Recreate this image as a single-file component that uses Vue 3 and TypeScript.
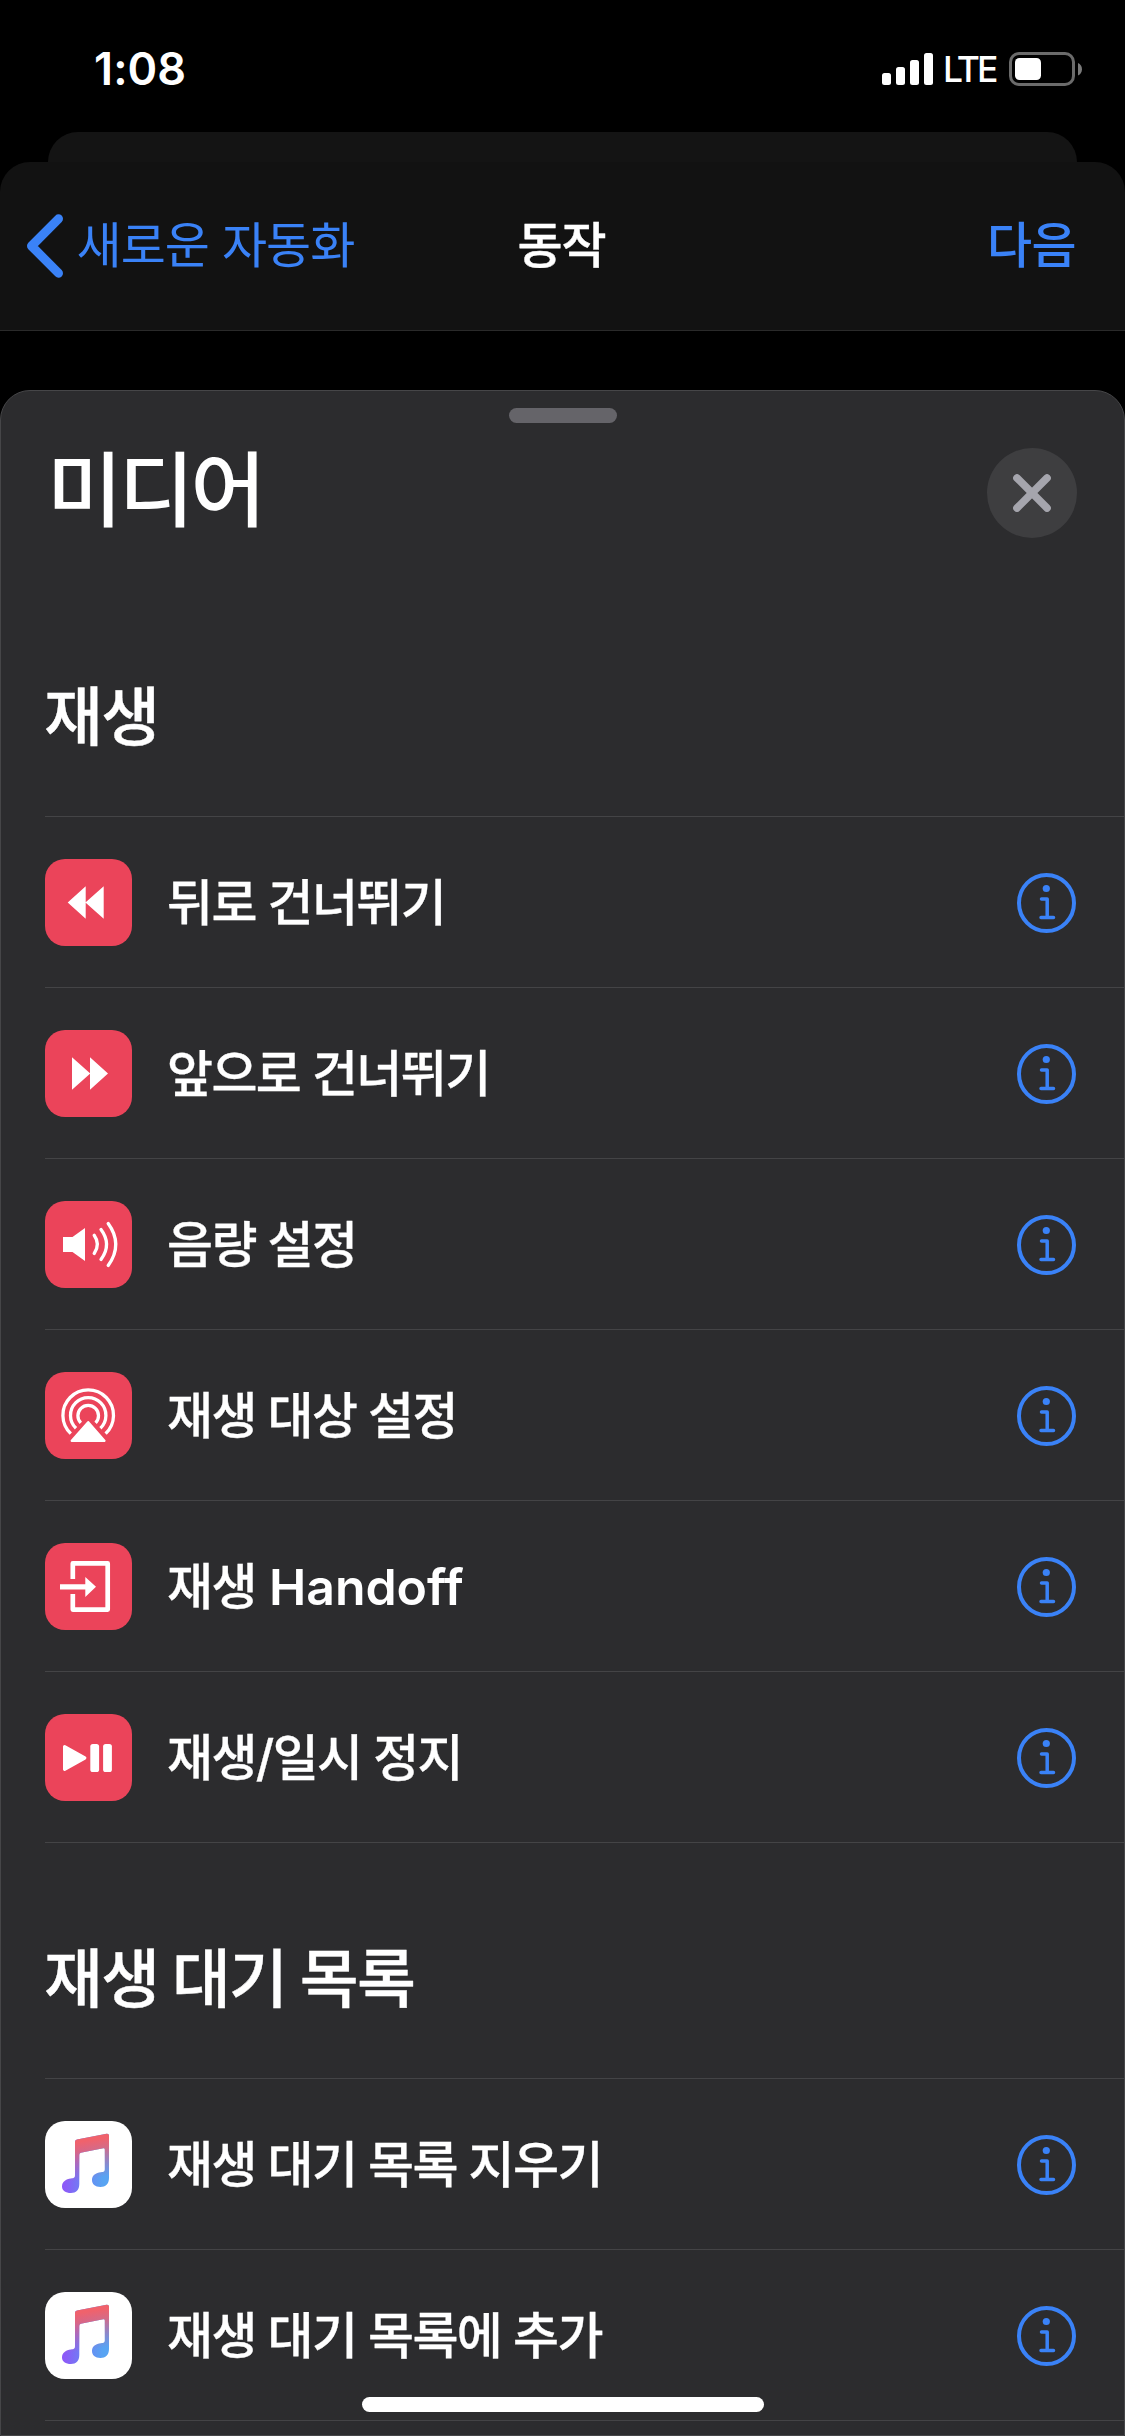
<script setup lang="ts">
type IconName = 'rewind' | 'forward' | 'volume' | 'airplay' | 'handoff' | 'playpause' | 'music'

interface Action {
  label: string
  latin?: string
  icon: IconName
}

interface Section {
  title: string
  actions: Action[]
}

const sections: Section[] = [
  {
    title: '재생',
    actions: [
      { label: '뒤로 건너뛰기', icon: 'rewind' },
      { label: '앞으로 건너뛰기', icon: 'forward' },
      { label: '음량 설정', icon: 'volume' },
      { label: '재생 대상 설정', icon: 'airplay' },
      { label: '재생 ', latin: 'Handoff', icon: 'handoff' },
      { label: '재생/일시 정지', icon: 'playpause' },
    ],
  },
  {
    title: '재생 대기 목록',
    actions: [
      { label: '재생 대기 목록 지우기', icon: 'music' },
      { label: '재생 대기 목록에 추가', icon: 'music' },
    ],
  },
]

const notePath =
  'M30 21Q30 19 32 18.6L61.5 12.8Q64 12.4 64 14.5V57C64 63 60.5 66 55.5 66C50 66 47 63 47 59C47 54 51 51.8 56 51.2C59 50.8 59.8 50.5 59.8 48V28.5Q59.8 27 58.3 27.3L35.8 31.8Q34.3 32.1 34.3 33.8V63C34.3 69 31 72 26 72C20.5 72 17 69.5 17 65.5C17 60.5 21 58.2 26 57.5C29 57 30 56.8 30 54Z'
</script>

<template>
  <div class="screen">
    <header class="status">
      <span class="time">1:08</span>
      <div class="indicators">
        <svg class="signal" width="51" height="32" viewBox="0 0 51 32" fill="#fff">
          <rect x="0" y="20" width="9" height="12" rx="2.5" />
          <rect x="14" y="14" width="9" height="18" rx="2.5" />
          <rect x="28" y="7" width="9" height="25" rx="2.5" />
          <rect x="42" y="0" width="9" height="32" rx="2.5" />
        </svg>
        <span class="lte">LTE</span>
        <svg class="battery" width="73" height="34" viewBox="0 0 73 34">
          <rect x="1.5" y="1.5" width="63" height="31" rx="8.5" fill="none" stroke="#6b6b6b" stroke-width="3" />
          <rect x="6" y="6" width="26" height="22" rx="4.5" fill="#fff" />
          <path d="M69 11C71.500 12 73 14.500 73 17.200S71.500 22.500 69 23.500Z" fill="#7a7a7a" />
        </svg>
      </div>
    </header>

    <div class="back-sheet"></div>

    <nav class="nav">
      <div class="back">
        <svg width="38" height="64" viewBox="0 0 38 64" fill="none" stroke="#3a82f7" stroke-width="9" stroke-linecap="round" stroke-linejoin="round">
          <path d="M32.500 4.800L5.500 32L32.500 59.200" />
        </svg>
        <span class="back-label">새로운 자동화</span>
      </div>
      <span class="nav-title">동작</span>
      <span class="next">다음</span>
    </nav>

    <main class="panel">
      <div class="grabber"></div>
      <div class="panel-head">
        <h1>미디어</h1>
        <button class="close" type="button">
          <svg width="38" height="38" viewBox="0 0 38 38" stroke="#a5a5ad" stroke-width="7.600" stroke-linecap="round">
            <path d="M4 4L34 34M34 4L4 34" />
          </svg>
        </button>
      </div>

      <section v-for="section in sections" :key="section.title">
        <h2>{{ section.title }}</h2>
        <ul>
          <li v-for="action in section.actions" :key="action.label">
            <svg class="tile" :class="{ light: action.icon === 'music' }" width="87" height="87" viewBox="0 0 87 87" fill="#fff">
              <path v-if="action.icon === 'rewind'" d="M22.700 43.500L40.700 27.200V43.300L58.700 27.200V59.800L40.700 43.700V59.800Z" />
              <path v-else-if="action.icon === 'forward'" d="M27 27.200L45 43.300V27.200L63 43.500L45 59.800V43.700L27 59.800Z" />
              <template v-else-if="action.icon === 'volume'">
                <path d="M18 36H27.500L40 27V60L27.500 51H18Z" />
                <g fill="none" stroke="#fff" stroke-width="3.300" stroke-linecap="round">
                  <path d="M49.200 34.300Q55.600 43.400 49.200 52.500" />
                  <path d="M56 28.500Q67.200 43.400 56 58.500" />
                  <path d="M63.200 22.500Q78.400 43.400 63.200 64.500" />
                </g>
              </template>
              <template v-else-if="action.icon === 'airplay'">
                <g fill="none" stroke="#fff" stroke-width="3.300">
                  <path d="M25.800 61.600A25.300 25.300 0 1 1 60.600 61.600" />
                  <path d="M31 56.200A17.700 17.700 0 1 1 55.400 56.200" />
                  <path d="M35.800 50.900A10.300 10.300 0 1 1 50.600 50.900" />
                </g>
                <path d="M43.200 50.200L59.400 68.800H26.800Z" stroke="#fff" stroke-width="2.400" stroke-linejoin="round" />
              </template>
              <template v-else-if="action.icon === 'handoff'">
                <path d="M27.800 36V20.400H62.700V66.600H27.800V51" fill="none" stroke="#fff" stroke-width="4.700" stroke-linejoin="round" />
                <path d="M15 41.200H40.300V34L51 43.700L40.300 54V46.400H15Z" />
              </template>
              <template v-else-if="action.icon === 'playpause'">
                <path d="M19.600 32.600L39.800 44L19.600 55.300Z" stroke="#fff" stroke-width="3.200" stroke-linejoin="round" />
                <rect x="45.300" y="30" width="8.800" height="28" rx="2.600" />
                <rect x="58.100" y="30" width="8.800" height="28" rx="2.600" />
              </template>
              <template v-else>
                <defs>
                  <linearGradient id="noteBase" gradientUnits="userSpaceOnUse" x1="20" y1="62" x2="58" y2="62">
                    <stop offset="0" stop-color="#8c5af8" />
                    <stop offset=".35" stop-color="#7478f4" />
                    <stop offset="1" stop-color="#58a4f2" />
                  </linearGradient>
                  <linearGradient id="noteTop" gradientUnits="userSpaceOnUse" x1="40" y1="20" x2="46" y2="58">
                    <stop offset="0" stop-color="#f0626c" />
                    <stop offset=".25" stop-color="#ea6274" stop-opacity=".85" />
                    <stop offset="1" stop-color="#c85aa8" stop-opacity="0" />
                  </linearGradient>
                </defs>
                <path :d="notePath" fill="url(#noteBase)" />
                <path :d="notePath" fill="url(#noteTop)" />
              </template>
            </svg>
            <span class="label">{{ action.label }}<span v-if="action.latin" class="latin">{{ action.latin }}</span></span>
            <svg class="info" width="59" height="60" viewBox="0 0 59 60" fill="none" stroke="#3a82f7">
              <ellipse cx="29.500" cy="30" rx="27.500" ry="28" stroke-width="4" />
              <circle cx="29.300" cy="15.500" r="3.600" fill="#3a82f7" stroke="none" />
              <path d="M24.500 26H30.200V44.500M24 44.500H36.500" stroke-width="3.500" stroke-linecap="round" stroke-linejoin="round" />
            </svg>
          </li>
        </ul>
      </section>
    </main>
    <div class="home"></div>
  </div>
</template>

<style>
body {
  background: #000;
}
</style>

<style scoped>
.screen {
  position: relative;
  display: flex;
  flex-direction: column;
  width: 1125px;
  height: 2436px;
  overflow: hidden;
  background: #000;
  color: #fff;
  font-family: Inter, "Noto Sans CJK KR", sans-serif;
  white-space: nowrap;
}
.status {
  display: flex;
  justify-content: space-between;
  box-sizing: border-box;
  height: 132px;
  padding: 0 43px 0 94px;
}
.time {
  margin-top: 42px;
  font-size: 45px;
  line-height: 54px;
  font-weight: 600;
  letter-spacing: 0.1px;
}
.indicators {
  display: flex;
  align-items: flex-start;
}
.signal {
  margin-top: 53px;
}
.lte {
  width: 64px;
  margin: 48px 2px 0 10px;
  font-size: 35.5px;
  line-height: 44px;
  font-weight: 500;
  letter-spacing: -3px;
}
.battery {
  margin-top: 52px;
}
.back-sheet {
  height: 30px;
  margin: 0 48px;
  border-radius: 30px 30px 0 0;
  background: #141414;
}
.nav {
  display: grid;
  grid-template-columns: 1fr auto 1fr;
  align-items: center;
  box-sizing: border-box;
  height: 169px;
  padding: 0 49px;
  border-bottom: 1px solid #2a2a2a;
  border-radius: 30px 30px 0 0;
  background: #121212;
  font-size: 49px;
  line-height: 72px;
  letter-spacing: -1.2px;
}
.back {
  display: flex;
  align-items: center;
  gap: 12.5px;
  margin-left: -23px;
  color: #3a82f7;
}
.back-label {
  letter-spacing: -0.9px;
}
.nav-title {
  padding-right: 2px;
  font-weight: 500;
  -webkit-text-stroke: 0.4px currentColor;
}
.next {
  justify-self: end;
  color: #3a82f7;
  font-weight: 500;
  letter-spacing: -0.6px;
}
.panel {
  box-sizing: border-box;
  height: 2046px;
  margin-top: 59px;
  padding: 17px 0 0 44px;
  overflow: hidden;
  border: 1px solid #464648;
  border-radius: 30px 30px 0 0;
  background: #2c2c2e;
}
.grabber {
  width: 108px;
  height: 15px;
  margin: 0 auto;
  border-radius: 8px;
  background: #656469;
  transform: translateX(-22px);
}
.panel-head {
  display: flex;
  justify-content: space-between;
  height: 158px;
  padding: 0 47px 0 2px;
}
h1,
h2,
ul {
  margin: 0;
  padding: 0;
}
h1 {
  margin-top: 8px;
  font-size: 82px;
  line-height: 120px;
  font-weight: 500;
  letter-spacing: -3.7px;
}
.close {
  display: flex;
  align-items: center;
  justify-content: center;
  width: 90px;
  height: 90px;
  margin-top: 25px;
  padding: 0;
  border: 0;
  border-radius: 50%;
  background: #3e3e40;
}
h2 {
  box-sizing: border-box;
  height: 235px;
  margin-left: -1px;
  padding-top: 91px;
  font-size: 64px;
  line-height: 90px;
  font-weight: 500;
  letter-spacing: -1.7px;
  word-spacing: -1.8px;
  -webkit-text-stroke: 0.4px currentColor;
}
ul {
  list-style: none;
  border-top: 1px solid #444446;
}
li {
  display: flex;
  align-items: center;
  box-sizing: border-box;
  height: 171px;
  padding: 1px 48px 0 0;
  border-bottom: 1px solid #444446;
}
.tile {
  flex: none;
  border-radius: 20px;
  background: #eb445a;
}
.tile.light {
  background: #fff;
}
.label {
  flex: 1;
  margin-left: 35px;
  padding-top: 1px;
  font-size: 50px;
  line-height: 72px;
  font-weight: 500;
  letter-spacing: -1.6px;
  -webkit-text-stroke: 0.3px currentColor;
}
.latin {
  margin-left: 1.5px;
  font-weight: 600;
  letter-spacing: -0.05px;
  -webkit-text-stroke: 0;
}
.info {
  flex: none;
  margin-top: 1px;
}
.home {
  position: absolute;
  left: 362px;
  top: 2397px;
  width: 402px;
  height: 15px;
  border-radius: 8px;
  background: #fff;
}
</style>
